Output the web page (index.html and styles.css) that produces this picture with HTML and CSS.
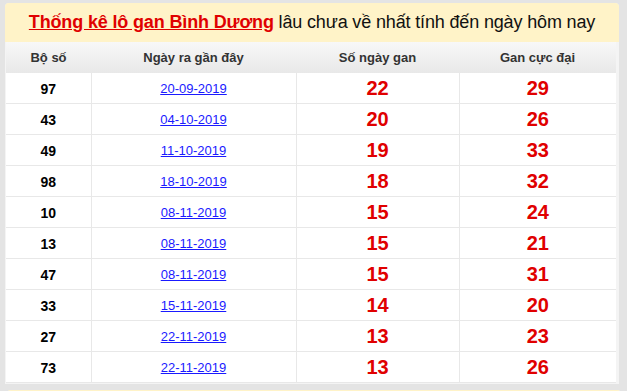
FILE: index.html
```html
<!DOCTYPE html>
<html lang="vi">
<head>
<meta charset="utf-8">
<title>Thống kê lô gan Bình Dương</title>
<link rel="stylesheet" href="styles.css">
</head>
<body>
<div class="page">
  <section class="panel">
    <h2 class="panel-title"><a href="#" class="title-link">Thống kê lô gan Bình Dương</a> lâu chưa về nhất tính đến ngày hôm nay</h2>
    <table class="gan-table">
      <colgroup>
        <col class="c1"><col class="c2"><col class="c3"><col class="c4">
      </colgroup>
      <thead>
        <tr><th>Bộ số</th><th>Ngày ra gần đây</th><th>Số ngày gan</th><th>Gan cực đại</th></tr>
      </thead>
      <tbody>
        <tr><td class="num">97</td><td class="date"><a href="#">20-09-2019</a></td><td class="big">22</td><td class="big">29</td></tr>
        <tr><td class="num">43</td><td class="date"><a href="#">04-10-2019</a></td><td class="big">20</td><td class="big">26</td></tr>
        <tr><td class="num">49</td><td class="date"><a href="#">11-10-2019</a></td><td class="big">19</td><td class="big">33</td></tr>
        <tr><td class="num">98</td><td class="date"><a href="#">18-10-2019</a></td><td class="big">18</td><td class="big">32</td></tr>
        <tr><td class="num">10</td><td class="date"><a href="#">08-11-2019</a></td><td class="big">15</td><td class="big">24</td></tr>
        <tr><td class="num">13</td><td class="date"><a href="#">08-11-2019</a></td><td class="big">15</td><td class="big">21</td></tr>
        <tr><td class="num">47</td><td class="date"><a href="#">08-11-2019</a></td><td class="big">15</td><td class="big">31</td></tr>
        <tr><td class="num">33</td><td class="date"><a href="#">15-11-2019</a></td><td class="big">14</td><td class="big">20</td></tr>
        <tr><td class="num">27</td><td class="date"><a href="#">22-11-2019</a></td><td class="big">13</td><td class="big">23</td></tr>
        <tr><td class="num">73</td><td class="date"><a href="#">22-11-2019</a></td><td class="big">13</td><td class="big">26</td></tr>
      </tbody>
    </table>
  </section>
  <section class="panel next">
    <h2 class="panel-title">&nbsp;</h2>
  </section>
</div>
</body>
</html>
```

FILE: styles.css
```css
html, body {
  margin: 0;
  padding: 0;
}
body {
  background: #e4e4e4;
  font-family: "Liberation Sans", Arial, sans-serif;
  overflow: hidden;
}
.page {
  padding: 3px 8px 0 5px;
  display: flex;
  flex-direction: column;
  gap: 6px;
}
.panel {
  width: 614px;
  background: #f4f4f4;
  border-radius: 4px 4px 0 0;
  padding: 0 3px 1px 1px;
  box-sizing: border-box;
}
.panel-title {
  margin: 0 -3px 0 -1px;
  background: #fff3c8;
  border-radius: 4px 4px 0 0;
  padding: 9px 0;
  font-size: 18px;
  line-height: 21px;
  font-weight: normal;
  color: #111;
  text-align: center;
  letter-spacing: -0.15px;
}
.title-link {
  color: #e00000;
  font-weight: bold;
  text-decoration: underline;
}
.gan-table {
  width: 610px;
  border-collapse: collapse;
  table-layout: fixed;
  background: #fff;
}
.c1 { width: 85px; }
.c2 { width: 205px; }
.c3 { width: 163px; }
.c4 { width: 157px; }
.gan-table th {
  height: 31px;
  padding: 0;
  font-size: 13px;
  font-weight: bold;
  color: #333;
  background: linear-gradient(#f8f8f8, #e8e8e8);
  text-align: center;
  vertical-align: middle;
}
.gan-table td {
  height: 30px;
  padding: 0;
  text-align: center;
  vertical-align: middle;
  border: 1px solid #e8e8e8;
  border-top: none;
  line-height: 20px;
}
.gan-table td:first-child { border-left: none; }
.gan-table td:last-child { border-right: none; }
.gan-table td.num {
  font-size: 14px;
  font-weight: bold;
  color: #000;
  height: 28px;
  padding-top: 2px;
  line-height: 16px;
}
.gan-table td.date {
  font-size: 13px;
  height: 28px;
  padding-top: 2px;
  line-height: 16px;
}
.gan-table td.date a {
  color: #1a1aff;
  text-decoration: underline;
}
.gan-table td.big {
  font-size: 20px;
  font-weight: bold;
  color: #e00000;
  line-height: 23px;
}
.next {
  margin-left: 2px;
}
```
